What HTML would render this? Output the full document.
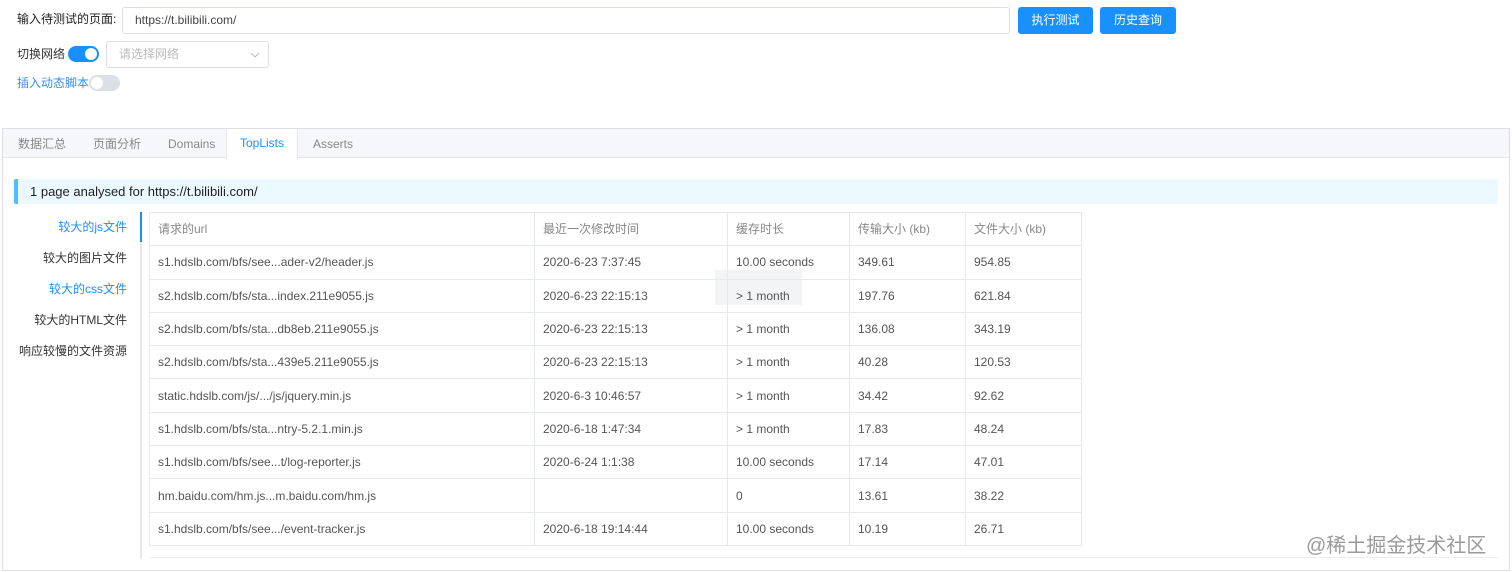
<!DOCTYPE html>
<html><head><meta charset="utf-8"><style>
*{box-sizing:border-box;margin:0;padding:0}
body{width:1512px;height:572px;background:#fff;font-family:"Liberation Sans","Noto Sans CJK SC",sans-serif;font-size:12px;color:#333;position:relative;overflow:hidden;line-height:16px}
.a{position:absolute;line-height:16px}
.btn{background:#1890ff;color:#fff;border-radius:3px;text-align:center;line-height:27px!important;font-size:12px}
table{border-collapse:collapse;position:absolute;left:149px;top:212px}
td{border:1px solid #e6e9ee;height:33.3px;padding:0 8px;font-size:12px;color:#555;white-space:nowrap;line-height:14px}
tr:first-child td{color:#888;font-weight:normal}
</style></head><body>
<div class="a" style="left:17px;top:11px;font-size:12px;color:#222">输入待测试的页面:</div>
<div class="a" style="left:122px;top:7px;width:888px;height:27px;border:1px solid #dcdfe6;border-radius:3px;padding-left:12px;line-height:25px;color:#444">https://t.bilibili.com/</div>
<div class="a btn" style="left:1018px;top:7px;width:75px;height:27px">执行测试</div>
<div class="a btn" style="left:1100px;top:7px;width:76px;height:27px">历史查询</div>
<div class="a" style="left:17px;top:46px;color:#333">切换网络</div>
<div class="a" style="left:68px;top:46px;width:31px;height:16px;border-radius:8px;background:#1890ff"><div class="a" style="right:2px;top:2px;width:12px;height:12px;border-radius:6px;background:#fff"></div></div>
<div class="a" style="left:106px;top:41px;width:163px;height:27px;border:1px solid #dcdfe6;border-radius:3px;padding-left:12px;line-height:25px;color:#bbb"><span style="line-height:25px">请选择网络</span><svg class="a" style="right:8px;top:9px" width="10" height="8" viewBox="0 0 10 8"><path d="M1 2 L5 6 L9 2" fill="none" stroke="#bbb" stroke-width="1"/></svg></div>
<div class="a" style="left:17px;top:75px;color:#3a8ee6">插入动态脚本</div>
<div class="a" style="left:89px;top:75px;width:31px;height:16px;border-radius:8px;background:#dcdfe6"><div class="a" style="left:2px;top:2px;width:12px;height:12px;border-radius:6px;background:#fff"></div></div>

<div class="a" style="left:2px;top:128px;width:1508px;height:443px;border:1px solid #dcdfe6;background:#fff"></div>
<div class="a" style="left:3px;top:129px;width:1506px;height:29px;background:#f5f7fa;border-bottom:1px solid #e4e7ed"></div>
<div class="a" style="left:18px;top:136px;color:#888">数据汇总</div>
<div class="a" style="left:93px;top:136px;color:#888">页面分析</div>
<div class="a" style="left:168px;top:136px;color:#888">Domains</div>
<div class="a" style="left:226px;top:129px;width:72px;height:30px;background:#fff;border-left:1px solid #e4e7ed;border-right:1px solid #e4e7ed;text-align:center;line-height:29px;color:#1890ff">TopLists</div>
<div class="a" style="left:313px;top:136px;color:#888">Asserts</div>

<div class="a" style="left:14px;top:179px;width:1484px;height:25px;background:#ecf8ff;border-left:4px solid #50bfff;border-radius:2px;padding-left:12px;line-height:25px;font-size:13px;color:#222">1 page analysed for https://t.bilibili.com/</div>

<div class="a" style="left:0;top:219px;width:127px;text-align:right;color:#1890ff">较大的js文件</div>
<div class="a" style="left:0;top:250px;width:127px;text-align:right;color:#333">较大的图片文件</div>
<div class="a" style="left:0;top:281px;width:127px;text-align:right;color:#1890ff">较大的css文件</div>
<div class="a" style="left:0;top:312px;width:127px;text-align:right;color:#333">较大的HTML文件</div>
<div class="a" style="left:0;top:343px;width:127px;text-align:right;color:#333">响应较慢的文件资源</div>
<div class="a" style="left:140px;top:212px;width:2px;height:346px;background:#e4e7ed"></div>
<div class="a" style="left:140px;top:212px;width:2px;height:30px;background:#1890ff"></div>
<div class="a" style="left:149px;top:546px;width:1350px;height:12px;border-bottom:1px solid #eceef2"></div>
<div class="a" style="left:715px;top:270px;width:87px;height:35px;background:#f3f4f6"></div>

<table>
<tr><td style="width:385px">请求的url</td><td style="width:193px">最近一次修改时间</td><td style="width:122px">缓存时长</td><td style="width:116px">传输大小 (kb)</td><td style="width:116px">文件大小 (kb)</td></tr>
<tr><td>s1.hdslb.com/bfs/see...ader-v2/header.js</td><td>2020-6-23 7:37:45</td><td>10.00 seconds</td><td>349.61</td><td>954.85</td></tr>
<tr><td>s2.hdslb.com/bfs/sta...index.211e9055.js</td><td>2020-6-23 22:15:13</td><td>&gt; 1 month</td><td>197.76</td><td>621.84</td></tr>
<tr><td>s2.hdslb.com/bfs/sta...db8eb.211e9055.js</td><td>2020-6-23 22:15:13</td><td>&gt; 1 month</td><td>136.08</td><td>343.19</td></tr>
<tr><td>s2.hdslb.com/bfs/sta...439e5.211e9055.js</td><td>2020-6-23 22:15:13</td><td>&gt; 1 month</td><td>40.28</td><td>120.53</td></tr>
<tr><td>static.hdslb.com/js/.../js/jquery.min.js</td><td>2020-6-3 10:46:57</td><td>&gt; 1 month</td><td>34.42</td><td>92.62</td></tr>
<tr><td>s1.hdslb.com/bfs/sta...ntry-5.2.1.min.js</td><td>2020-6-18 1:47:34</td><td>&gt; 1 month</td><td>17.83</td><td>48.24</td></tr>
<tr><td>s1.hdslb.com/bfs/see...t/log-reporter.js</td><td>2020-6-24 1:1:38</td><td>10.00 seconds</td><td>17.14</td><td>47.01</td></tr>
<tr><td>hm.baidu.com/hm.js...m.baidu.com/hm.js</td><td></td><td>0</td><td>13.61</td><td>38.22</td></tr>
<tr><td>s1.hdslb.com/bfs/see.../event-tracker.js</td><td>2020-6-18 19:14:44</td><td>10.00 seconds</td><td>10.19</td><td>26.71</td></tr>
</table>
<div class="a" style="left:1306px;top:534px;font-size:20px;line-height:24px;color:#9a9a9a">@稀土掘金技术社区</div>
</body></html>
